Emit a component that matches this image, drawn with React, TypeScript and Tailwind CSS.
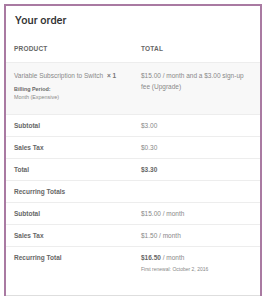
import React from 'react';

interface TotalRow {
    label: string;
    value: React.ReactNode;
}

const totals: TotalRow[] = [
    { label: 'Subtotal', value: '$3.00' },
    { label: 'Sales Tax', value: '$0.30' },
    { label: 'Total', value: <strong className="font-bold text-[#666]">$3.30</strong> },
];

const recurring: TotalRow[] = [
    { label: 'Subtotal', value: '$15.00 / month' },
    { label: 'Sales Tax', value: '$1.50 / month' },
];

function Row({ label, value }: TotalRow) {
    return (
        <div className="grid grid-cols-2 h-[22px] border-t border-[#ededed] items-center">
            <div className="px-2 font-bold text-[#666]">{label}</div>
            <div className="px-2 text-[#888]">{value}</div>
        </div>
    );
}

export default function App() {
    return (
        <div className="min-h-[300px] bg-white pt-1 px-1 font-['Liberation_Sans',Arial,sans-serif] text-[6.5px] leading-[11px]">
            <div className="border-2 border-b-0 border-[#a97aa2] bg-white">
                <h3 className="h-[28px] flex items-center pl-[9px] font-['Roboto',Arial,sans-serif] text-[11px] font-medium text-[#333]">
                    Your order
                </h3>

                {/* Table header */}
                <div className="grid grid-cols-2 h-[29px] items-center border-b border-[#ededed] font-bold uppercase text-[#666] tracking-[0.2px]">
                    <div className="px-2">Product</div>
                    <div className="px-2">Total</div>
                </div>

                {/* Cart item */}
                <div className="grid grid-cols-2 h-[51px] bg-[#f8f8f8] pt-[7px] text-[#888]">
                    <div className="px-2">
                        <div>
                            Variable Subscription to Switch{' '}
                            <strong className="ml-[2px] font-bold text-[#777]">×&nbsp;1</strong>
                        </div>
                        <div className="mt-[4px] text-[5.4px] leading-[8px]">
                            <div className="font-bold text-[#666]">Billing Period:</div>
                            <div>Month (Expensive)</div>
                        </div>
                    </div>
                    <div className="px-2">$15.00 / month and a $3.00 sign-up fee (Upgrade)</div>
                </div>

                {totals.map((row) => (
                    <Row key={row.label} {...row} />
                ))}

                <div className="h-[22px] border-t border-[#ededed] flex items-center px-2 font-bold text-[#666]">
                    Recurring Totals
                </div>

                {recurring.map((row) => (
                    <Row key={row.label} {...row} />
                ))}

                {/* Recurring total */}
                <div className="grid grid-cols-2 h-[50px] border-t border-b border-t-[#ededed] border-b-[#dedede] pt-[5px]">
                    <div className="px-2 font-bold text-[#666]">Recurring Total</div>
                    <div className="px-2 text-[#888]">
                        <div>
                            <strong className="font-bold text-[#666]">$16.50</strong> / month
                        </div>
                        <div className="mt-[2px] text-[5px] leading-[8px]">First renewal: October 2, 2016</div>
                    </div>
                </div>
            </div>
        </div>
    );
}
